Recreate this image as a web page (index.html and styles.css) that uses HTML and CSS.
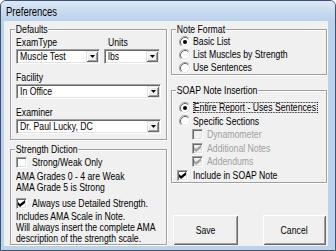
FILE: index.html
```html
<!DOCTYPE html>
<html>
<head>
<meta charset="utf-8">
<title>Preferences</title>
<link rel="stylesheet" href="styles.css">
</head>
<body>
<div class="window">
  <div class="titlebar"><span class="t">Preferences</span></div>
  <div class="client">
    <div class="col col-left">
      <div class="group defaults">
        <span class="cap">Defaults</span>
        <div class="pair">
          <div class="field exam">
            <div class="lbl"><span class="t">ExamType</span></div>
            <div class="combo"><span class="t val">Muscle Test</span><span class="drop"><svg width="5" height="3" viewBox="0 0 5 3"><path d="M0 0h5l-2.5 3z"/></svg></span></div>
          </div>
          <div class="field units">
            <div class="lbl lbl-units"><span class="t">Units</span></div>
            <div class="combo"><span class="t val">lbs</span><span class="drop"><svg width="5" height="3" viewBox="0 0 5 3"><path d="M0 0h5l-2.5 3z"/></svg></span></div>
          </div>
        </div>
        <div class="field spaced">
          <div class="lbl"><span class="t">Facility</span></div>
          <div class="combo"><span class="t val">In Office</span><span class="drop"><svg width="5" height="3" viewBox="0 0 5 3"><path d="M0 0h5l-2.5 3z"/></svg></span></div>
        </div>
        <div class="field spaced">
          <div class="lbl"><span class="t">Examiner</span></div>
          <div class="combo"><span class="t val">Dr. Paul Lucky, DC</span><span class="drop"><svg width="5" height="3" viewBox="0 0 5 3"><path d="M0 0h5l-2.5 3z"/></svg></span></div>
        </div>
      </div>
      <div class="group diction">
        <span class="cap">Strength Diction</span>
        <div class="opt"><span class="cb"></span><span class="t">Strong/Weak Only</span></div>
        <p class="note note-a">AMA Grades 0 - 4 are Weak<br>AMA Grade 5 is Strong</p>
        <div class="opt opt-b"><span class="cb"><svg width="7" height="7" viewBox="0 0 7 7"><path d="M0 2l2 2 5-4v3l-5 4-2-2z"/></svg></span><span class="t">Always use Detailed Strength.</span></div>
        <p class="note note-b">Includes AMA Scale in Note.<br>Will always insert the complete AMA<br>description of the strength scale.</p>
      </div>
    </div>
    <div class="col col-right">
      <div class="group format">
        <span class="cap">Note Format</span>
        <div class="row"><svg class="radio" width="12" height="12" viewBox="0 0 12 12"><circle cx="6" cy="6" r="4.5" fill="#fff"/><path d="M2.11 9.89A5.5 5.5 0 0 1 9.89 2.11" fill="none" stroke="#a0a0a0"/><path d="M9.89 2.11A5.5 5.5 0 0 1 2.11 9.89" fill="none" stroke="#fff"/><path d="M2.82 9.18A4.5 4.5 0 0 1 9.18 2.82" fill="none" stroke="#696969"/><path d="M9.18 2.82A4.5 4.5 0 0 1 2.82 9.18" fill="none" stroke="#e3e3e3"/><circle cx="6" cy="6" r="2" fill="#000"/></svg><span class="t">Basic List</span></div>
        <div class="row"><svg class="radio" width="12" height="12" viewBox="0 0 12 12"><circle cx="6" cy="6" r="4.5" fill="#fff"/><path d="M2.11 9.89A5.5 5.5 0 0 1 9.89 2.11" fill="none" stroke="#a0a0a0"/><path d="M9.89 2.11A5.5 5.5 0 0 1 2.11 9.89" fill="none" stroke="#fff"/><path d="M2.82 9.18A4.5 4.5 0 0 1 9.18 2.82" fill="none" stroke="#696969"/><path d="M9.18 2.82A4.5 4.5 0 0 1 2.82 9.18" fill="none" stroke="#e3e3e3"/></svg><span class="t">List Muscles by Strength</span></div>
        <div class="row"><svg class="radio" width="12" height="12" viewBox="0 0 12 12"><circle cx="6" cy="6" r="4.5" fill="#fff"/><path d="M2.11 9.89A5.5 5.5 0 0 1 9.89 2.11" fill="none" stroke="#a0a0a0"/><path d="M9.89 2.11A5.5 5.5 0 0 1 2.11 9.89" fill="none" stroke="#fff"/><path d="M2.82 9.18A4.5 4.5 0 0 1 9.18 2.82" fill="none" stroke="#696969"/><path d="M9.18 2.82A4.5 4.5 0 0 1 2.82 9.18" fill="none" stroke="#e3e3e3"/></svg><span class="t">Use Sentences</span></div>
      </div>
      <div class="group soap">
        <span class="cap">SOAP Note Insertion</span>
        <div class="row"><svg class="radio" width="12" height="12" viewBox="0 0 12 12"><circle cx="6" cy="6" r="4.5" fill="#fff"/><path d="M2.11 9.89A5.5 5.5 0 0 1 9.89 2.11" fill="none" stroke="#a0a0a0"/><path d="M9.89 2.11A5.5 5.5 0 0 1 2.11 9.89" fill="none" stroke="#fff"/><path d="M2.82 9.18A4.5 4.5 0 0 1 9.18 2.82" fill="none" stroke="#696969"/><path d="M9.18 2.82A4.5 4.5 0 0 1 2.82 9.18" fill="none" stroke="#e3e3e3"/><circle cx="6" cy="6" r="2" fill="#000"/></svg><span class="t focus">Entire Report - Uses Sentences</span></div>
        <div class="row"><svg class="radio" width="12" height="12" viewBox="0 0 12 12"><circle cx="6" cy="6" r="4.5" fill="#fff"/><path d="M2.11 9.89A5.5 5.5 0 0 1 9.89 2.11" fill="none" stroke="#a0a0a0"/><path d="M9.89 2.11A5.5 5.5 0 0 1 2.11 9.89" fill="none" stroke="#fff"/><path d="M2.82 9.18A4.5 4.5 0 0 1 9.18 2.82" fill="none" stroke="#696969"/><path d="M9.18 2.82A4.5 4.5 0 0 1 2.82 9.18" fill="none" stroke="#e3e3e3"/></svg><span class="t">Specific Sections</span></div>
        <div class="row sub disabled"><span class="cb"></span><span class="t">Dynamometer</span></div>
        <div class="row sub disabled"><span class="cb"><svg width="7" height="7" viewBox="0 0 7 7"><path d="M0 2l2 2 5-4v3l-5 4-2-2z"/></svg></span><span class="t">Additional Notes</span></div>
        <div class="row sub disabled"><span class="cb"><svg width="7" height="7" viewBox="0 0 7 7"><path d="M0 2l2 2 5-4v3l-5 4-2-2z"/></svg></span><span class="t">Addendums</span></div>
        <div class="row incl"><span class="cb"><svg width="7" height="7" viewBox="0 0 7 7"><path d="M0 2l2 2 5-4v3l-5 4-2-2z"/></svg></span><span class="t">Include in SOAP Note</span></div>
      </div>
      <div class="buttons">
        <div class="btn save"><span class="t tc">Save</span></div>
        <div class="btn cancel"><span class="t tc">Cancel</span></div>
      </div>
    </div>
  </div>
</div>
</body>
</html>
```
FILE: styles.css
```css
html, body {
  margin: 0;
  padding: 0;
  background: #ffffff;
}
body {
  font-family: "Liberation Sans", Arial, sans-serif;
  font-size: 11px;
  line-height: 13px;
  color: #000;
}
.t {
  display: inline-block;
  white-space: nowrap;
  transform: scaleX(0.79);
  transform-origin: 0 50%;
}
.tc { transform-origin: 50% 50%; }

.window {
  width: 336px;
  height: 251px;
  box-sizing: border-box;
  border: 1px solid #3d5270;
  border-radius: 6px 6px 0 0;
  background: #bcd2ea;
  display: flex;
  flex-direction: column;
  overflow: hidden;
}
.titlebar {
  height: 20px;
  box-sizing: border-box;
  padding: 4px 0 0 5px;
  font-size: 12px;
  line-height: 14px;
  background: linear-gradient(to bottom, #dde8f5 0%, #cadcf0 45%, #bcd2ea 100%);
}
.client {
  flex: 1;
  margin: 0 7px 4px 3px;
  background: #f0f0f0;
  display: flex;
  gap: 4px;
  padding: 8px 1px 0 6px;
}
.col {
  display: flex;
  flex-direction: column;
}
.col-left { width: 157px; }
.col-right { width: 156px; }

.group {
  position: relative;
  border: 1px solid #a0a0a0;
  box-shadow: inset 1px 1px 0 #fff, 1px 1px 0 #fff;
}
.cap {
  position: absolute;
  top: -7px;
  left: 4px;
  padding: 0 1px;
  line-height: 13px;
  background: #f0f0f0;
  white-space: nowrap;
  transform: scaleX(0.79);
  transform-origin: 0 50%;
}
.defaults { padding: 6px 5px 5px 5px; }
.diction { padding: 6px 5px 0 5px; margin-top: 9px; }
.format { padding: 5px 5px 0 7px; }
.soap { padding: 10px 5px 0 7px; margin-top: 15px; }

.pair { display: flex; gap: 4px; }
.exam { width: 84px; }
.units { width: 56px; }
.lbl { line-height: 13px; height: 13px; }
.lbl-units { padding-left: 4px; }
.spaced { margin-top: 7px; }

.combo {
  height: 15px;
  box-sizing: border-box;
  border: 1px solid;
  border-color: #a0a0a0 #fff #fff #a0a0a0;
  box-shadow: inset 1px 1px 0 #696969, inset -1px -1px 0 #e3e3e3;
  background: #fff;
  display: flex;
  align-items: center;
  padding: 1px 1px 1px 3px;
}
.val {
  line-height: 11px;
}
.drop {
  margin-left: auto;
  flex: none;
  width: 12px;
  height: 11px;
  box-sizing: border-box;
  background: #f0f0f0;
  box-shadow: inset 1px 1px 0 #e3e3e3, inset -1px -1px 0 #696969, inset 2px 2px 0 #fff, inset -2px -2px 0 #a0a0a0;
  display: flex;
  align-items: center;
  justify-content: center;
}
.drop svg { display: block; fill: #000; }

.cb {
  flex: none;
  width: 11px;
  height: 11px;
  box-sizing: border-box;
  border: 1px solid;
  border-color: #a0a0a0 #fff #fff #a0a0a0;
  box-shadow: inset 1px 1px 0 #696969, inset -1px -1px 0 #e3e3e3;
  background: #fff;
  display: flex;
  align-items: center;
  justify-content: center;
}
.cb svg { display: block; fill: #000; }
.disabled { color: #a0a0a0; }
.disabled .cb { background: #f0f0f0; }
.disabled .cb svg { fill: #a0a0a0; }

.opt {
  display: flex;
  align-items: center;
  gap: 5px;
  height: 13px;
  line-height: 13px;
}
.opt-b { margin-top: 4px; }
.note {
  margin: 0;
  line-height: 11px;
  white-space: nowrap;
  transform: scaleX(0.79);
  transform-origin: 0 50%;
}
.note-a { margin-top: 2px; }
.note-b { margin-top: 1px; }

.row {
  display: flex;
  align-items: center;
  gap: 2px;
  height: 13px;
  line-height: 13px;
}
.soap .row { height: 13.5px; }
.radio { display: block; flex: none; }
.sub { margin-left: 13px; gap: 4px; }
.incl { margin-left: -2px; gap: 5px; }
.focus {
  outline: 1px dotted #000;
  outline-offset: -1px;
  padding: 0 2px 0 1px;
  line-height: 11px;
}

.buttons {
  display: flex;
  margin-top: 32px;
  padding-left: 2px;
}
.btn {
  height: 30px;
  box-sizing: border-box;
  background: #f0f0f0;
  box-shadow: inset 1px 1px 0 #fff, inset -1px -1px 0 #696969, inset 2px 2px 0 #f0f0f0, inset -2px -2px 0 #a0a0a0;
  display: flex;
  align-items: center;
  justify-content: center;
}
.save { width: 65px; }
.cancel { width: 63px; margin-left: 25px; }
```
